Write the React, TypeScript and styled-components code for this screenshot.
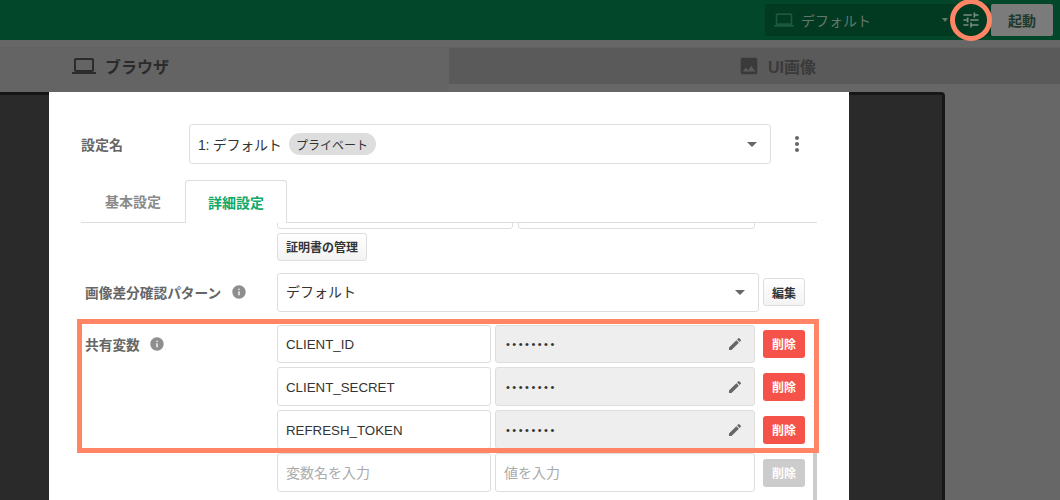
import React from 'react';
import styled, { createGlobalStyle } from 'styled-components';
import { MdLaptop, MdImage, MdTune, MdEdit, MdMoreVert, MdInfo, MdArrowDropDown } from 'react-icons/md';

const Global = createGlobalStyle`
  html, body { margin: 0; padding: 0; background: #676767; }
  body { font-family: "Liberation Sans", "Noto Sans CJK JP", sans-serif; font-size: 14px; color: #333; overflow: hidden; }
  * { box-sizing: border-box; }
`;

const Page = styled.div`
  position: relative;
  width: 1060px;
  height: 500px;
  overflow: hidden;
  display: flex;
  flex-direction: column;
  background: #676767;
`;

const Header = styled.header`
  height: 40px;
  flex: none;
  background: #03472a;
  display: flex;
  align-items: center;
  justify-content: flex-end;
  padding-right: 7px;
`;

const DeviceSelect = styled.div`
  width: 192px;
  height: 32px;
  background: #023a21;
  border-radius: 2px 0 0 2px;
  display: flex;
  align-items: center;
  padding: 0 9px 0 9px;
  color: #62786c;
  font-size: 14px;
  gap: 7px;
  svg:first-child { color: #1a5a3a; }
  span { flex: 1; }
`;

const SmallCaret = styled.i`
  width: 0;
  height: 0;
  border-left: 3px solid transparent;
  border-right: 3px solid transparent;
  border-top: 4px solid #5f7a6c;
`;

const TuneButton = styled.div`
  width: 34px;
  height: 32px;
  display: flex;
  align-items: center;
  justify-content: center;
  padding-right: 6px;
  background: #023a21;
  color: #7a8a82;
`;

const StartButton = styled.div`
  width: 62px;
  height: 32px;
  background: #7b7b7b;
  border-radius: 2px;
  color: #1f3a2c;
  font-weight: 700;
  font-size: 14px;
  display: flex;
  align-items: center;
  justify-content: center;
`;

const ViewTabs = styled.nav`
  padding-top: 7px;
  height: 52px;
  flex: none;
  background: #676767;
`;

const TabStrip = styled.div`
  height: 37px;
  display: flex;
  border-top: 1px solid #626262;
  background: #5a5a5a;
`;

const ViewTab = styled.div<{ $active?: boolean; $pad: number; $gap: number }>`
  ${(p) => (p.$active ? 'width: 449px; height: 44px; background: #646464;' : 'flex: 1;')}
  padding-left: ${(p) => p.$pad}px;
  color: ${(p) => (p.$active ? '#2b2b2b' : '#3a3a3a')};
  display: flex;
  align-items: ${(p) => (p.$active ? 'flex-start' : 'center')};
  gap: ${(p) => p.$gap}px;
  font-size: 16px;
  font-weight: 700;
`;

const ActiveTabLabel = styled.span`
  height: 36px;
  display: flex;
  align-items: center;
  gap: 9px;
`;

const Stage = styled.main`
  flex: 1;
  display: flex;
`;

const Preview = styled.div`
  width: 945px;
  background: #2a2a2a;
  border-top: 3px solid #161616;
  border-right: 3px solid #161616;
  border-top-right-radius: 4px;
`;

const Modal = styled.section`
  position: absolute;
  left: 49px;
  top: 92px;
  width: 800px;
  height: 408px;
  background: #fff;
  padding: 32px 0 0 32px;
  display: flex;
  flex-direction: column;
`;

const ConfigRow = styled.div`
  display: flex;
  align-items: center;
  height: 40px;
  flex: none;
`;

const ConfigLabel = styled.div`
  width: 108px;
  flex: none;
  font-weight: 700;
  font-size: 14px;
  color: #666;
`;

const Field = styled.div<{ $w?: number; $muted?: boolean; $placeholder?: boolean }>`
  width: ${(p) => (p.$w ? `${p.$w}px` : 'auto')};
  height: 38.5px;
  flex: none;
  border: 1px solid #dedede;
  border-radius: 3px;
  background: ${(p) => (p.$muted ? '#eeeeee' : '#fff')};
  color: ${(p) => (p.$placeholder ? '#aaa' : '#333')};
  display: flex;
  align-items: center;
  padding: 0 8px;
  font-size: 14px;
`;

const ConfigSelect = styled(Field)`
  width: 582px;
  height: 40px;
  gap: 7px;
`;

const PatternSelect = styled(Field)`
  height: 39px;
`;

const Latin = styled.span`
  font-size: 13.3px;
  margin-top: 1px;
`;

const Kana = styled.span`
  margin-top: -2px;
`;

const ConfigName = styled.span`
  letter-spacing: -0.25px;
`;

const Caret = styled.span`
  margin-left: auto;
  display: flex;
  color: #666;
  margin-right: -2px;
`;

const Pill = styled.span`
  height: 22px;
  padding: 0 7.5px;
  border-radius: 11px;
  background: #dddddd;
  font-size: 12px;
  display: inline-flex;
  align-items: center;
  color: #333;
`;

const Kebab = styled.div`
  width: 52px;
  flex: none;
  display: flex;
  justify-content: center;
  color: #666;
`;

const TabList = styled.div`
  margin-top: 16px;
  height: 43px;
  flex: none;
  width: 736px;
  display: flex;
  align-items: flex-end;
  position: relative;
  z-index: 1;
  border-bottom: 1px solid #dedede;
`;

const Tab = styled.div<{ $active?: boolean; $w: number }>`
  width: ${(p) => p.$w}px;
  height: ${(p) => (p.$active ? '43px' : '42px')};
  margin-bottom: ${(p) => (p.$active ? '-1px' : '0')};
  display: flex;
  align-items: center;
  justify-content: center;
  font-weight: 700;
  font-size: 14px;
  color: ${(p) => (p.$active ? '#0fa968' : '#8a8a8a')};
  background: ${(p) => (p.$active ? '#fff' : 'transparent')};
  border: ${(p) => (p.$active ? '1px solid #dedede' : '0')};
  border-bottom: 0;
  border-radius: 3px 3px 0 0;
`;

const ScrollArea = styled.div`
  position: relative;
  width: 736px;
  flex: 1;
  overflow: hidden;
`;

const ScrollInner = styled.div`
  margin-top: -33px;
  display: flex;
  flex-direction: column;
`;

const FormRow = styled.div<{ $top?: number }>`
  display: grid;
  grid-template-columns: 196px 1fr;
  margin-top: ${(p) => p.$top ?? 0}px;
`;

const RowLabel = styled.div`
  padding-left: 4px;
  height: 38.5px;
  display: flex;
  align-items: center;
  gap: 9.5px;
  font-weight: 700;
  font-size: 13.7px;
  color: #666;
  svg { color: #8e8e8e; }
`;

const Controls = styled.div`
  display: flex;
  flex-direction: column;
  gap: 4.4px;
`;

const Line = styled.div<{ $gap?: number }>`
  display: flex;
  align-items: center;
  gap: ${(p) => p.$gap ?? 4}px;
`;

const Button = styled.div<{ $kind?: 'danger' | 'off'; $w?: number }>`
  width: ${(p) => p.$w ?? 42}px;
  height: 28px;
  flex: none;
  border-radius: 3px;
  display: flex;
  align-items: center;
  justify-content: center;
  font-size: 12px;
  font-weight: 700;
  margin-left: ${(p) => (p.$kind ? '4px' : '0')};
  color: ${(p) => (p.$kind ? '#fff' : '#333')};
  background: ${(p) =>
    p.$kind === 'danger' ? '#f5534a' : p.$kind === 'off' ? '#cccccc' : 'linear-gradient(#fff, #f3f3f3)'};
  border: ${(p) => (p.$kind ? '0' : '1px solid #dedede')};
`;

const ClippedButton = styled(Button)`
  margin-left: 4px;
`;

const Dots = styled.span`
  flex: 1;
  padding-left: 2px;
  font-size: 11px;
  letter-spacing: 2.5px;
  color: #333;
`;

const PencilWrap = styled.span`
  display: flex;
  color: #666;
  margin-right: 3px;
`;

const ScrollThumb = styled.div`
  position: absolute;
  right: 0;
  top: 229px;
  bottom: 0;
  width: 4px;
  background: #cccccc;
`;

const Highlight = styled.div`
  position: absolute;
  left: 76.7px;
  top: 319.3px;
  width: 742px;
  height: 133.4px;
  border: 5px solid #ff8566;
  pointer-events: none;
`;

const Ring = styled.div`
  position: absolute;
  left: 950px;
  top: -1px;
  width: 42px;
  height: 42px;
  border: 5px solid #ff8566;
  border-radius: 50%;
  pointer-events: none;
`;

const vars = ['CLIENT_ID', 'CLIENT_SECRET', 'REFRESH_TOKEN'];

export default function App() {
  return (
    <Page>
      <Global />
      <Header>
        <DeviceSelect>
          <MdLaptop size={20} />
          <span>デフォルト</span>
          <SmallCaret />
        </DeviceSelect>
        <TuneButton>
          <MdTune size={20} />
        </TuneButton>
        <StartButton>起動</StartButton>
      </Header>
      <ViewTabs>
        <TabStrip>
          <ViewTab $active $pad={72} $gap={9}>
            <ActiveTabLabel>
              <MdLaptop size={24} />
              ブラウザ
            </ActiveTabLabel>
          </ViewTab>
          <ViewTab $pad={289} $gap={8}>
            <MdImage size={22} />
            UI画像
          </ViewTab>
        </TabStrip>
      </ViewTabs>
      <Stage>
        <Preview />
      </Stage>
      <Modal>
        <ConfigRow>
          <ConfigLabel>設定名</ConfigLabel>
          <ConfigSelect>
            <ConfigName>
              1: デフォルト
            </ConfigName>
            <Pill>プライベート</Pill>
            <Caret>
              <MdArrowDropDown size={24} />
            </Caret>
          </ConfigSelect>
          <Kebab>
            <MdMoreVert size={24} />
          </Kebab>
        </ConfigRow>
        <TabList>
          <Tab $w={104}>基本設定</Tab>
          <Tab $active $w={102}>詳細設定</Tab>
        </TabList>
        <ScrollArea>
          <ScrollInner>
            <FormRow>
              <div />
              <Controls>
                <Line $gap={5}>
                  <Field $w={236} />
                  <Field $w={237} />
                  <ClippedButton $w={40} />
                </Line>
                <Button $w={90}>証明書の管理</Button>
              </Controls>
            </FormRow>
            <FormRow $top={12}>
              <RowLabel>
                画像差分確認パターン
                <MdInfo size={16} />
              </RowLabel>
              <Line>
                <PatternSelect $w={482}>
                  <Kana>デフォルト</Kana>
                  <Caret>
                    <MdArrowDropDown size={24} />
                  </Caret>
                </PatternSelect>
                <Button>編集</Button>
              </Line>
            </FormRow>
            <FormRow $top={12.7}>
              <RowLabel>
                共有変数
                <MdInfo size={16} />
              </RowLabel>
              <Controls>
                {vars.map((v) => (
                  <Line key={v}>
                    <Field $w={214}>
                      <Latin>{v}</Latin>
                    </Field>
                    <Field $w={260} $muted>
                      <Dots>••••••••</Dots>
                      <PencilWrap>
                        <MdEdit size={16} />
                      </PencilWrap>
                    </Field>
                    <Button $kind="danger">削除</Button>
                  </Line>
                ))}
                <Line>
                  <Field $w={214} $placeholder>
                    <Kana>変数名を入力</Kana>
                  </Field>
                  <Field $w={260} $placeholder>
                    <Kana>値を入力</Kana>
                  </Field>
                  <Button $kind="off">削除</Button>
                </Line>
              </Controls>
            </FormRow>
          </ScrollInner>
          <ScrollThumb />
        </ScrollArea>
      </Modal>
      <Highlight />
      <Ring />
    </Page>
  );
}
